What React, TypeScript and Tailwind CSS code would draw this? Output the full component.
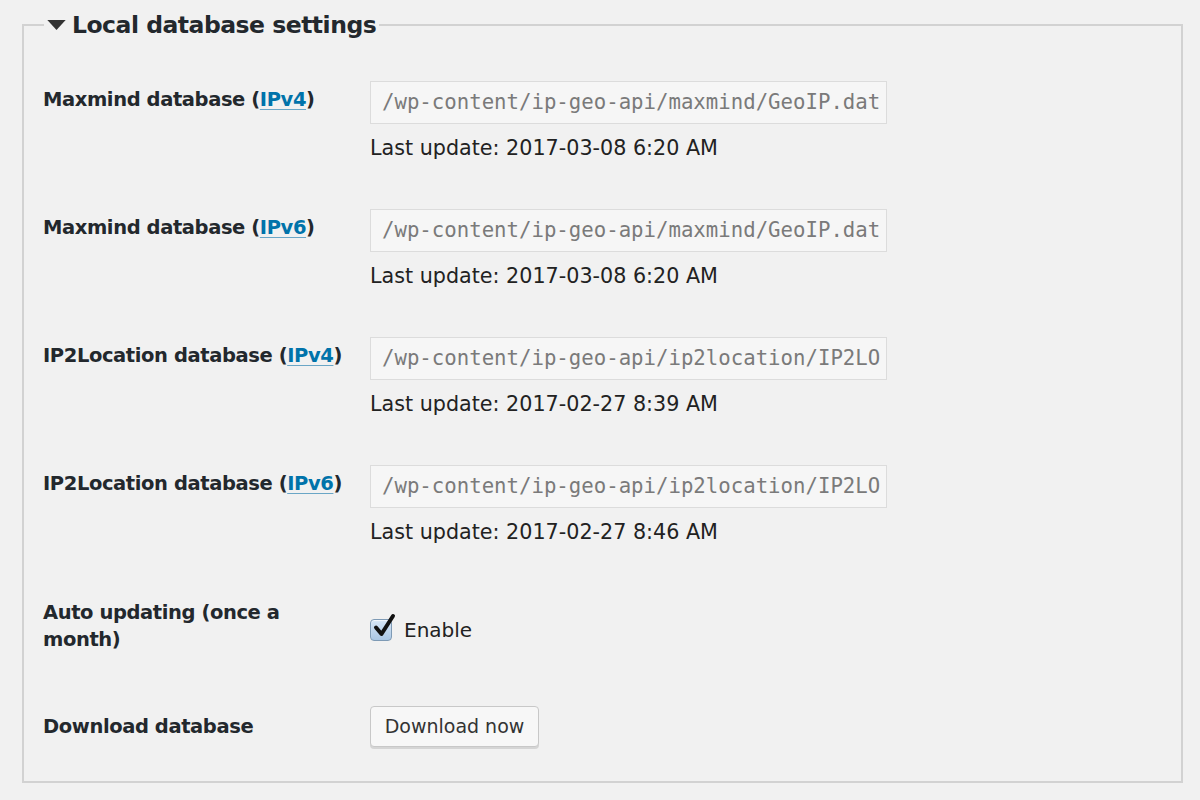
import React from "react";

const font = "font-['DejaVu_Sans','Liberation_Sans',sans-serif]";

type DbRow = { name: string; ver: string; path: string; updated: string };

const rows: DbRow[] = [
  { name: "Maxmind database", ver: "IPv4", path: "/wp-content/ip-geo-api/maxmind/GeoIP.dat", updated: "2017-03-08 6:20 AM" },
  { name: "Maxmind database", ver: "IPv6", path: "/wp-content/ip-geo-api/maxmind/GeoIP.dat", updated: "2017-03-08 6:20 AM" },
  { name: "IP2Location database", ver: "IPv4", path: "/wp-content/ip-geo-api/ip2location/IP2LO", updated: "2017-02-27 8:39 AM" },
  { name: "IP2Location database", ver: "IPv6", path: "/wp-content/ip-geo-api/ip2location/IP2LO", updated: "2017-02-27 8:46 AM" },
];

function Label({ children, top = "pt-[5px]" }: { children: React.ReactNode; top?: string }) {
  return (
    <div className={`w-[327px] shrink-0 pr-[18px] text-[19.5px] leading-[27px] font-bold tracking-[-0.4px] text-[#23282d] ${top}`}>
      {children}
    </div>
  );
}

function Checkbox() {
  return (
    <span className="relative inline-flex h-[22px] w-[22px] rounded-[4px] border border-[#7e9ab5] bg-gradient-to-b from-[#d6e6f6] to-[#a9c6e4] shadow-[inset_0_1px_1px_rgba(255,255,255,0.7)]">
      <svg viewBox="0 0 24 24" className="absolute -top-[7px] left-[1px] h-[26px] w-[24px]">
        <path d="M4 13.5 L9.5 20 L21 2" fill="none" stroke="#111" strokeWidth="4" strokeLinecap="round" strokeLinejoin="round" />
      </svg>
    </span>
  );
}

export default function App() {
  return (
    <div className={`min-h-[800px] w-[1200px] bg-[#f1f1f1] pt-[7px] ${font}`}>
      <fieldset className="ml-[22px] w-[1161px] border-2 border-[#d2d2d2] pb-[34px]">
        <legend className="ml-[20px] flex items-center px-[3px] text-[23.5px] leading-[36px] font-bold tracking-[-0.5px] text-[#23282d]">
          <svg viewBox="0 0 20 12" className="mr-[6px] h-[11px] w-[19px]">
            <path d="M0 0 H20 L10 11 Z" fill="#333" />
          </svg>
          Local database settings
        </legend>

        <div className="pl-[19px] pt-[19px]">
          {rows.map((r, i) => (
            <div key={i} className="flex h-[128px] pt-[19px]">
              <Label>
                {r.name} (<a className="text-[#0073aa] underline decoration-[#6aa6c6] underline-offset-[3px]">{r.ver}</a>)
              </Label>
              <div className="flex flex-col">
                <div className="h-[43px] w-[517px] border border-[#dcdcdc] bg-[#f6f6f6] pl-[11px] pr-[4px]">
                  <div className="whitespace-nowrap font-['DejaVu_Sans_Mono','Liberation_Mono',monospace] text-[20.7px] leading-[41px] text-[#7a7a7a]">
                    {r.path}
                  </div>
                </div>
                <p className="mt-[10px] text-[20.7px] leading-[28px] text-[#222]">Last update: {r.updated}</p>
              </div>
            </div>
          ))}

          <div className="flex h-[114px] pt-[20px]">
            <Label>Auto updating (once a month)</Label>
            <label className="mt-[24px] flex h-[24px] items-center gap-[12px] text-[20px] text-[#222]">
              <Checkbox />
              Enable
            </label>
          </div>

          <div className="flex items-start pt-[18px]">
            <Label top="pt-[7px]">Download database</Label>
            <button className="h-[41px] w-[169px] rounded-[4px] border border-[#c8c8c8] bg-[#f7f7f7] text-[19px] text-[#333] shadow-[0_2px_0_#d5d5d5]">
              Download now
            </button>
          </div>
        </div>
      </fieldset>
    </div>
  );
}
